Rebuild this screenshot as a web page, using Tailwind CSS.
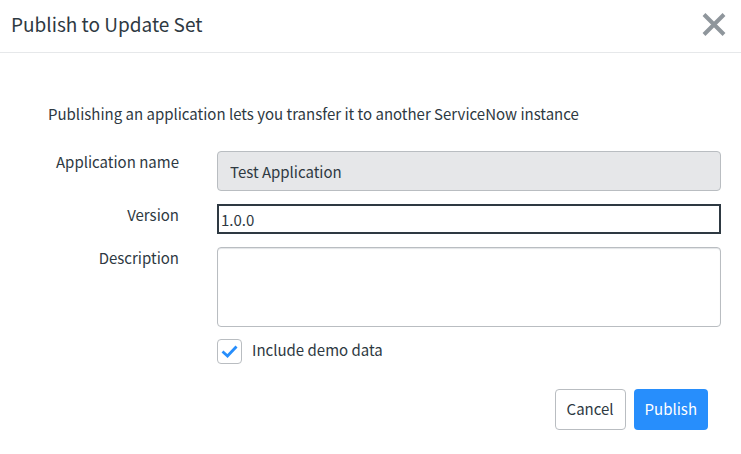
<!DOCTYPE html>
<html lang="en">
<head>
<meta charset="utf-8">
<meta name="viewport" content="width=device-width, initial-scale=1">
<title>Publish to Update Set</title>
<script src="https://cdn.jsdelivr.net/npm/@tailwindcss/browser@4"></script>
</head>
<body class="bg-white font-['Noto_Sans_CJK_SC',sans-serif] text-[15px] leading-[22px] text-[#2e3942]">
<div role="dialog" aria-labelledby="title">
  <header class="flex items-center justify-between border-b border-[#e6e8ea] pl-[11px] pr-[11px] h-[53px]">
    <h1 id="title" class="pb-1 text-[19px] leading-8">Publish to Update Set</h1>
    <button type="button" aria-label="Close" class="mb-1 p-1">
      <svg class="size-6" viewBox="0 0 24 24" fill="none" stroke="#8f969c" stroke-width="4"><path d="M2 2.500L22 22.500M22 2.500L2 22.500"/></svg>
    </button>
  </header>
  <form class="pr-5">
    <p class="mt-[50px] pl-12">Publishing an application lets you transfer it to another ServiceNow instance</p>
    <div class="mt-[26px] grid grid-cols-[179px_1fr] gap-x-[38px] gap-y-[13px]">
      <label for="app" class="text-right">Application name</label>
      <input id="app" type="text" value="Test Application" readonly class="h-10 w-full rounded border border-[#b9bdc1] bg-[#e6e7e9] px-3 outline-none">
      <label for="version" class="text-right">Version</label>
      <input id="version" type="text" value="1.0.0" class="h-[30px] w-full border-2 border-[#2e3942] px-0.5 outline-none">
      <label for="description" class="text-right">Description</label>
      <textarea id="description" class="block h-20 w-full resize-none rounded border border-[#b9bdc1] px-3 py-2 shadow-[inset_0_1px_1px_#e3e5e7] outline-none"></textarea>
    </div>
    <div class="mt-3 flex pl-[217px]">
      <span class="relative size-[25px]">
        <input id="demo" type="checkbox" checked class="peer block size-[25px] appearance-none rounded border border-[#b9bdc1] bg-white">
        <svg class="pointer-events-none absolute inset-0 hidden size-[25px] peer-checked:block" viewBox="0 0 25 25" fill="none" stroke="#278efc" stroke-width="2.8"><path d="M5.500 12.500L10.500 17L19.500 7.500"/></svg>
      </span>
      <label for="demo" class="pl-[10px]">Include demo data</label>
    </div>
    <div class="mt-[25px] flex justify-end gap-2 pr-[13px]">
      <button type="button" class="h-[41px] rounded border border-[#b9bdc1] bg-white px-[11px] pb-0.5">Cancel</button>
      <button type="submit" class="h-[41px] rounded bg-[#278efc] px-[11px] pb-0.5 text-white">Publish</button>
    </div>
  </form>
</div>
</body>
</html>
